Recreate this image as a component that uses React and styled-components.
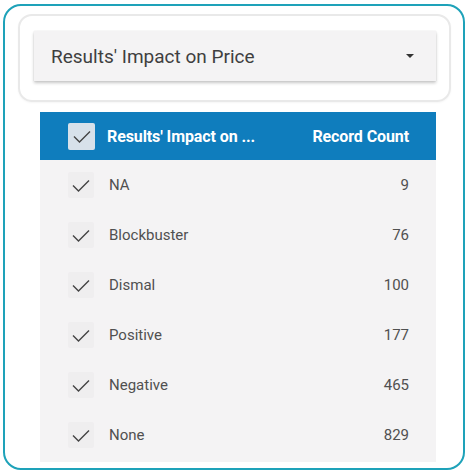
import React from 'react';
import styled, { createGlobalStyle } from 'styled-components';

const GlobalStyle = createGlobalStyle`
  body {
    margin: 0;
    background: #ffffff;
    font-family: Roboto, "Liberation Sans", sans-serif;
  }
`;

const Frame = styled.div`
  box-sizing: border-box;
  width: 462px;
  height: 466px;
  margin: 4px 0 0 3px;
  border: 2px solid #1ea2b9;
  border-radius: 18px;
  padding: 8px 0 0 13px;
  overflow: hidden;
`;

const Card = styled.div`
  box-sizing: border-box;
  width: 433px;
  height: 88px;
  border: 2px solid #e9e9e9;
  border-radius: 14px;
  padding: 15px 13px 0 14px;
  box-shadow: 0 1px 2px rgba(0, 0, 0, 0.04);
`;

const Select = styled.div`
  display: flex;
  align-items: center;
  justify-content: space-between;
  height: 50px;
  padding: 0 22px 0 17px;
  background: #f4f3f4;
  box-shadow: 0 2px 3px rgba(0, 0, 0, 0.22), 0 0 1px rgba(0, 0, 0, 0.12);
  font-size: 19px;
  color: #3f3f3f;
`;

const Caret = styled.span`
  width: 0;
  height: 0;
  border-left: 4px solid transparent;
  border-right: 4px solid transparent;
  border-top: 4px solid #333333;
`;

const Table = styled.div`
  width: 396px;
  margin: 10px 0 0 22px;
  background: #f4f3f4;
  padding-bottom: 2px;
`;

const HeaderRow = styled.div`
  display: flex;
  align-items: center;
  height: 48px;
  padding: 0 27px 0 28px;
  background: #0f7dbd;
  color: #ffffff;
  font-weight: 700;
  font-size: 16px;
  letter-spacing: -0.1px;
`;

const Row = styled.div`
  display: flex;
  align-items: center;
  height: 50px;
  padding: 0 27px 0 28px;
  color: #505050;
  font-size: 15px;
`;

const CheckBox = styled.span`
  display: flex;
  align-items: center;
  justify-content: center;
  flex: none;
  width: ${({ $head }) => ($head ? '27px' : '26px')};
  height: ${({ $head }) => ($head ? '27px' : '26px')};
  border-radius: 2px;
  background: ${({ $head }) => ($head ? '#d7e1ea' : '#efeeef')};
  margin-right: ${({ $head }) => ($head ? '12px' : '15px')};
`;

const Label = styled.span`
  flex: 1;
  white-space: nowrap;
`;

const Count = styled.span`
  text-align: right;
`;

const Check = () => (
  <svg width="22" height="22" viewBox="0 0 22 22">
    <path d="M3 11.5 L8.5 17 L19 6.5" fill="none" stroke="#444444" strokeWidth="1.4" />
  </svg>
);

const rows = [
  ['NA', 9],
  ['Blockbuster', 76],
  ['Dismal', 100],
  ['Positive', 177],
  ['Negative', 465],
  ['None', 829],
];

export default function App() {
  return (
    <>
      <GlobalStyle />
      <Frame>
        <Card>
          <Select>
            <span>Results' Impact on Price</span>
            <Caret />
          </Select>
        </Card>
        <Table>
          <HeaderRow>
            <CheckBox $head>
              <Check />
            </CheckBox>
            <Label>Results' Impact on ...</Label>
            <Count>Record Count</Count>
          </HeaderRow>
          {rows.map(([name, count]) => (
            <Row key={name}>
              <CheckBox>
                <Check />
              </CheckBox>
              <Label>{name}</Label>
              <Count>{count}</Count>
            </Row>
          ))}
        </Table>
      </Frame>
    </>
  );
}
